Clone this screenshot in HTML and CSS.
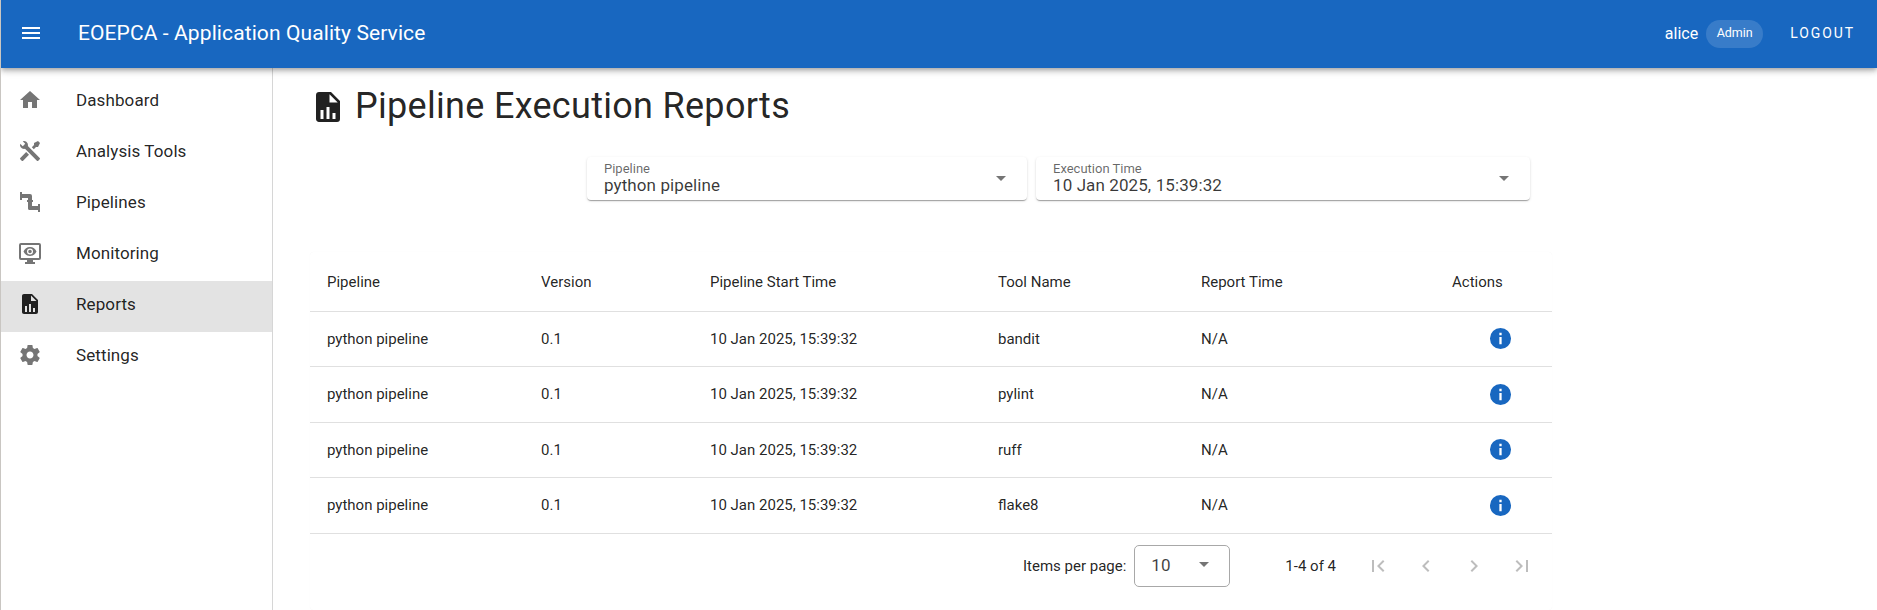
FILE: index.html
```html
<!DOCTYPE html>
<html lang="en">
<head>
    <meta charset="UTF-8">
    <meta name="viewport" content="width=device-width, initial-scale=1.0">
    <title>EOEPCA - Application Quality Service</title>
    <link rel="stylesheet" href="styles.css">
</head>
<body>
    <!-- Top bar -->
    <header class="topbar">
        <button class="menu-btn" aria-label="Menu">
            <svg class="icon" viewBox="0 0 24 24"><path d="M3 18h18v-2H3v2zm0-5h18v-2H3v2zm0-7v2h18V6H3z"/></svg>
        </button>
        <span class="app-title">EOEPCA - Application Quality Service</span>
        <span class="user-name">alice</span>
        <span class="role-chip">Admin</span>
        <span class="logout">LOGOUT</span>
    </header>

    <div class="layout">
        <!-- Side menu -->
        <nav class="sidenav">
            <a class="nav-item">
                <svg class="icon" viewBox="0 0 24 24"><path d="M10 20v-6h4v6h5v-8h3L12 3 2 12h3v8z"/></svg>
                <span>Dashboard</span>
            </a>
            <a class="nav-item">
                <svg class="icon" viewBox="0 0 24 24"><path d="M21.710 20.290l-1.420 1.420a1 1 0 0 1-1.410 0L7 9.850A3.810 3.810 0 0 1 6 10a4 4 0 0 1-3.780-5.300l2.540 2.540.53-.53 1.420-1.420.53-.53L4.700 2.220A4 4 0 0 1 10 6a3.810 3.810 0 0 1-.15 1l11.860 11.880a1 1 0 0 1 0 1.410zM2.290 18.880a1 1 0 0 0 0 1.410l1.420 1.420a1 1 0 0 0 1.410 0L11 15.830 8.170 13zM20 2l-4 2v2l-2.170 2.170 2 2L18 8h2l2-4z"/></svg>
                <span>Analysis Tools</span>
            </a>
            <a class="nav-item">
                <svg class="icon" viewBox="0 0 24 24"><path d="M2 2h2v2h8a2 2 0 0 1 2 2v4h1v2h-1v4h6v-2h2v8h-2v-2h-9a2 2 0 0 1-1-1.500V12H9v-2h1V8H4v2H2z"/></svg>
                <span>Pipelines</span>
            </a>
            <a class="nav-item">
                <svg class="icon" viewBox="0 0 24 24"><path d="M3 2h18a2 2 0 0 1 2 2v13a2 2 0 0 1-2 2h-6v2h2v2H7v-2h2v-2H3a2 2 0 0 1-2-2V4a2 2 0 0 1 2-2zm0 2v13h18V4z"/><path d="M12 6c-3 0-5.500 1.800-6.500 4.500C6.500 13.200 9 15 12 15s5.500-1.800 6.500-4.500C17.500 7.800 15 6 12 6zm0 7.500a3 3 0 1 1 0-6 3 3 0 0 1 0 6zm0-4.800a1.800 1.800 0 1 0 0 3.600 1.800 1.800 0 0 0 0-3.600z"/></svg>
                <span>Monitoring</span>
            </a>
            <a class="nav-item active">
                <svg class="icon" viewBox="0 0 24 24"><path d="M13 9h5.500L13 3.500V9zM6 2h8l6 6v12a2 2 0 0 1-2 2H6c-1.110 0-2-.9-2-2V4c0-1.110.89-2 2-2zm1 18h2v-6H7v6zm4 0h2v-8h-2v8zm4 0h2v-4h-2v4z"/></svg>
                <span>Reports</span>
            </a>
            <a class="nav-item">
                <svg class="icon" viewBox="0 0 24 24"><path d="M19.430 12.980c.04-.32.07-.64.07-.98s-.03-.66-.07-.98l2.110-1.650c.19-.15.24-.42.12-.64l-2-3.460c-.12-.22-.39-.3-.61-.22l-2.490 1c-.52-.4-1.080-.73-1.690-.98l-.38-2.650C14.460 2.180 14.250 2 14 2h-4c-.25 0-.46.18-.49.42l-.38 2.650c-.61.25-1.170.59-1.690.98l-2.490-1c-.23-.09-.49 0-.61.22l-2 3.460c-.13.22-.07.49.12.64l2.110 1.650c-.04.32-.07.65-.07.98s.03.66.07.98l-2.110 1.650c-.19.15-.24.42-.12.64l2 3.460c.12.22.39.3.61.22l2.490-1c.52.4 1.080.73 1.690.98l.38 2.650c.03.24.24.42.49.42h4c.25 0 .46-.18.49-.42l.38-2.650c.61-.25 1.170-.59 1.690-.98l2.490 1c.23.09.49 0 .61-.22l2-3.460c.12-.22.07-.49-.12-.64l-2.110-1.650zM12 15.500c-1.930 0-3.500-1.570-3.500-3.500s1.570-3.500 3.500-3.500 3.500 1.570 3.500 3.500-1.570 3.500-3.500 3.500z"/></svg>
                <span>Settings</span>
            </a>
        </nav>

        <!-- Reports page -->
        <main class="content">
            <h1 class="page-title">
                <svg class="title-icon" viewBox="0 0 24 24"><path d="M13 9h5.500L13 3.500V9zM6 2h8l6 6v12a2 2 0 0 1-2 2H6c-1.110 0-2-.9-2-2V4c0-1.110.89-2 2-2zm1 18h2v-6H7v6zm4 0h2v-8h-2v8zm4 0h2v-4h-2v4z"/></svg>
                Pipeline Execution Reports
            </h1>

            <div class="filters">
                <div class="filter filter-pipeline">
                    <div class="filter-text">
                        <span class="filter-label">Pipeline</span>
                        <span class="filter-value">python pipeline</span>
                    </div>
                    <span class="arrow"></span>
                </div>
                <div class="filter filter-time">
                    <div class="filter-text">
                        <span class="filter-label">Execution Time</span>
                        <span class="filter-value">10 Jan 2025, 15:39:32</span>
                    </div>
                    <span class="arrow"></span>
                </div>
            </div>

            <div class="table-card">
                <table class="reports">
                    <colgroup>
                        <col class="col-pipeline">
                        <col class="col-version">
                        <col class="col-start">
                        <col class="col-tool">
                        <col class="col-report">
                        <col class="col-actions">
                    </colgroup>
                    <thead>
                        <tr>
                            <th>Pipeline</th>
                            <th>Version</th>
                            <th>Pipeline Start Time</th>
                            <th>Tool Name</th>
                            <th>Report Time</th>
                            <th>Actions</th>
                        </tr>
                    </thead>
                    <tbody>
                        <tr>
                            <td>python pipeline</td>
                            <td>0.1</td>
                            <td>10 Jan 2025, 15:39:32</td>
                            <td>bandit</td>
                            <td>N/A</td>
                            <td class="actions"><svg class="info" viewBox="0 0 24 24"><path d="M12 1a11 11 0 1 0 0 22 11 11 0 0 0 0-22zm1.200 17h-2.400v-7.500h2.400zm0-9.500h-2.400V6h2.400z"/></svg></td>
                        </tr>
                        <tr>
                            <td>python pipeline</td>
                            <td>0.1</td>
                            <td>10 Jan 2025, 15:39:32</td>
                            <td>pylint</td>
                            <td>N/A</td>
                            <td class="actions"><svg class="info" viewBox="0 0 24 24"><path d="M12 1a11 11 0 1 0 0 22 11 11 0 0 0 0-22zm1.200 17h-2.400v-7.500h2.400zm0-9.500h-2.400V6h2.400z"/></svg></td>
                        </tr>
                        <tr>
                            <td>python pipeline</td>
                            <td>0.1</td>
                            <td>10 Jan 2025, 15:39:32</td>
                            <td>ruff</td>
                            <td>N/A</td>
                            <td class="actions"><svg class="info" viewBox="0 0 24 24"><path d="M12 1a11 11 0 1 0 0 22 11 11 0 0 0 0-22zm1.200 17h-2.400v-7.500h2.400zm0-9.500h-2.400V6h2.400z"/></svg></td>
                        </tr>
                        <tr>
                            <td>python pipeline</td>
                            <td>0.1</td>
                            <td>10 Jan 2025, 15:39:32</td>
                            <td>flake8</td>
                            <td>N/A</td>
                            <td class="actions"><svg class="info" viewBox="0 0 24 24"><path d="M12 1a11 11 0 1 0 0 22 11 11 0 0 0 0-22zm1.200 17h-2.400v-7.500h2.400zm0-9.500h-2.400V6h2.400z"/></svg></td>
                        </tr>
                    </tbody>
                </table>

                <div class="paginator">
                    <span class="per-page">Items per page:</span>
                    <div class="page-size">
                        <span>10</span>
                        <span class="arrow"></span>
                    </div>
                    <span class="range">1-4 of 4</span>
                    <span class="page-btn"><svg class="icon" viewBox="0 0 24 24"><path d="M18.410 16.590L13.820 12l4.590-4.590L17 6l-6 6 6 6zM6 6h2v12H6z"/></svg></span>
                    <span class="page-btn"><svg class="icon" viewBox="0 0 24 24"><path d="M15.410 7.410L14 6l-6 6 6 6 1.410-1.410L10.830 12z"/></svg></span>
                    <span class="page-btn"><svg class="icon" viewBox="0 0 24 24"><path d="M10 6L8.590 7.410 13.170 12l-4.580 4.590L10 18l6-6z"/></svg></span>
                    <span class="page-btn"><svg class="icon" viewBox="0 0 24 24"><path d="M5.590 7.410L10.180 12l-4.590 4.590L7 18l6-6-6-6zM16 6h2v12h-2z"/></svg></span>
                </div>
            </div>
        </main>
    </div>
</body>
</html>
```

FILE: styles.css
```css
/* Reset */
* {
    margin: 0;
    padding: 0;
    box-sizing: border-box;
}

html, body {
    height: 100%;
    overflow: hidden;
}

body {
    font-family: Roboto, 'Liberation Sans', sans-serif;
    background-color: #fff;
    color: rgba(0, 0, 0, 0.87);
    border-left: 1px solid #c9c6c2;
    display: flex;
    flex-direction: column;
}

.icon {
    width: 24px;
    height: 24px;
    fill: currentColor;
    display: block;
}

/* Top bar */
.topbar {
    height: 68px;
    flex: none;
    display: flex;
    align-items: center;
    background-color: #1867c0;
    color: #fff;
    padding: 0 22px 2px 18px;
    box-shadow: 0 2px 4px -1px rgba(0, 0, 0, 0.2), 0 4px 5px rgba(0, 0, 0, 0.14), 0 1px 10px rgba(0, 0, 0, 0.12);
    position: relative;
    z-index: 2;
}

.menu-btn {
    background: none;
    border: none;
    color: #fff;
    width: 24px;
    height: 24px;
}

.app-title {
    font-size: 21px;
    margin-left: 35px;
    margin-right: auto;
    letter-spacing: 0.1px;
}

.user-name {
    font-size: 16px;
}

.role-chip {
    font-size: 12.500px;
    line-height: 26px;
    height: 28px;
    padding: 0 10.500px;
    margin-left: 8px;
    margin-top: 2px;
    border-radius: 14px;
    background-color: rgba(255, 255, 255, 0.14);
}

.logout {
    font-size: 14px;
    font-weight: 400;
    letter-spacing: 1.900px;
    margin-left: 27px;
}

/* Side menu */
.layout {
    flex: 1;
    display: flex;
    min-height: 0;
}

.sidenav {
    width: 272px;
    flex: none;
    padding-top: 9px;
    border-right: 1px solid #d6d6d6;
}

.nav-item {
    height: 51px;
    display: flex;
    align-items: center;
    gap: 34px;
    padding: 0 0 5px 17px;
    font-size: 17px;
    letter-spacing: 0.1px;
    color: rgba(0, 0, 0, 0.87);
}

.nav-item .icon {
    color: #757575;
}

.nav-item.active {
    background-color: #e3e3e3;
}

.nav-item.active .icon {
    color: #212121;
}

/* Page content */
.content {
    flex: 1;
    min-width: 0;
    padding: 16px 0 0 38px;
}

.page-title {
    display: flex;
    align-items: center;
    gap: 9px;
    font-size: 36px;
    font-weight: 400;
    line-height: 44px;
    letter-spacing: 0.3px;
}

.title-icon {
    width: 36px;
    height: 36px;
    fill: #212121;
    margin-left: -1px;
    margin-top: 2px;
}

/* Filters */
.filters {
    display: flex;
    gap: 9px;
    margin: 29px 0 0 276px;
}

.filter {
    height: 43px;
    display: flex;
    align-items: center;
    justify-content: space-between;
    padding: 0 21px 0 17px;
    background-color: #fff;
    border-radius: 4px;
    box-shadow: 0 2px 1px -1px rgba(0, 0, 0, 0.2), 0 1px 1px rgba(0, 0, 0, 0.14), 0 1px 3px rgba(0, 0, 0, 0.12);
}

.filter-pipeline {
    width: 440px;
}

.filter-time {
    width: 494px;
}

.filter-text {
    display: flex;
    flex-direction: column;
}

.filter-label {
    font-size: 13px;
    line-height: 13px;
    color: rgba(0, 0, 0, 0.6);
}

.filter-value {
    font-size: 17px;
    line-height: 20px;
    letter-spacing: 0.1px;
    color: rgba(0, 0, 0, 0.78);
}

.arrow {
    width: 0;
    height: 0;
    border-left: 5px solid transparent;
    border-right: 5px solid transparent;
    border-top: 5px solid #757575;
}

/* Table */
.table-card {
    width: 1242px;
    height: 358px;
    margin: 52px 0 0 -1px;
    border-radius: 4px;
    box-shadow: 0 0 1px rgba(0, 0, 0, 0.05);
}

.reports {
    width: 100%;
    border-collapse: collapse;
    table-layout: fixed;
    font-size: 15px;
}

.col-pipeline { width: 214px; }
.col-version { width: 169px; }
.col-start { width: 288px; }
.col-tool { width: 203px; }
.col-report { width: 251px; }
.col-actions { width: 117px; }

.reports th {
    height: 59px;
    padding: 2px 16px 0 17px;
    text-align: left;
    font-weight: 400;
    border-bottom: 1px solid #e0e0e0;
}

.reports td {
    height: 55.5px;
    padding: 0 16px 0 17px;
    border-bottom: 1px solid #e0e0e0;
}

.reports td.actions {
    padding-left: 54px;
}

.info {
    width: 23px;
    height: 23px;
    fill: #1867c0;
    display: block;
}

/* Paginator */
.paginator {
    display: flex;
    align-items: center;
    height: 65px;
    font-size: 15px;
}

.per-page {
    margin-left: 713px;
}

.page-size {
    width: 96px;
    height: 42px;
    margin-left: 8px;
    padding: 0 20px 3px 16px;
    display: flex;
    align-items: center;
    justify-content: space-between;
    font-size: 17px;
    color: rgba(0, 0, 0, 0.75);
    border: 1px solid #a8a8a8;
    border-radius: 5px;
}

.range {
    margin-left: 55px;
    margin-right: 18px;
}

.page-btn {
    width: 48px;
    height: 48px;
    display: flex;
    align-items: center;
    justify-content: center;
    color: #bdbdbd;
}
```
